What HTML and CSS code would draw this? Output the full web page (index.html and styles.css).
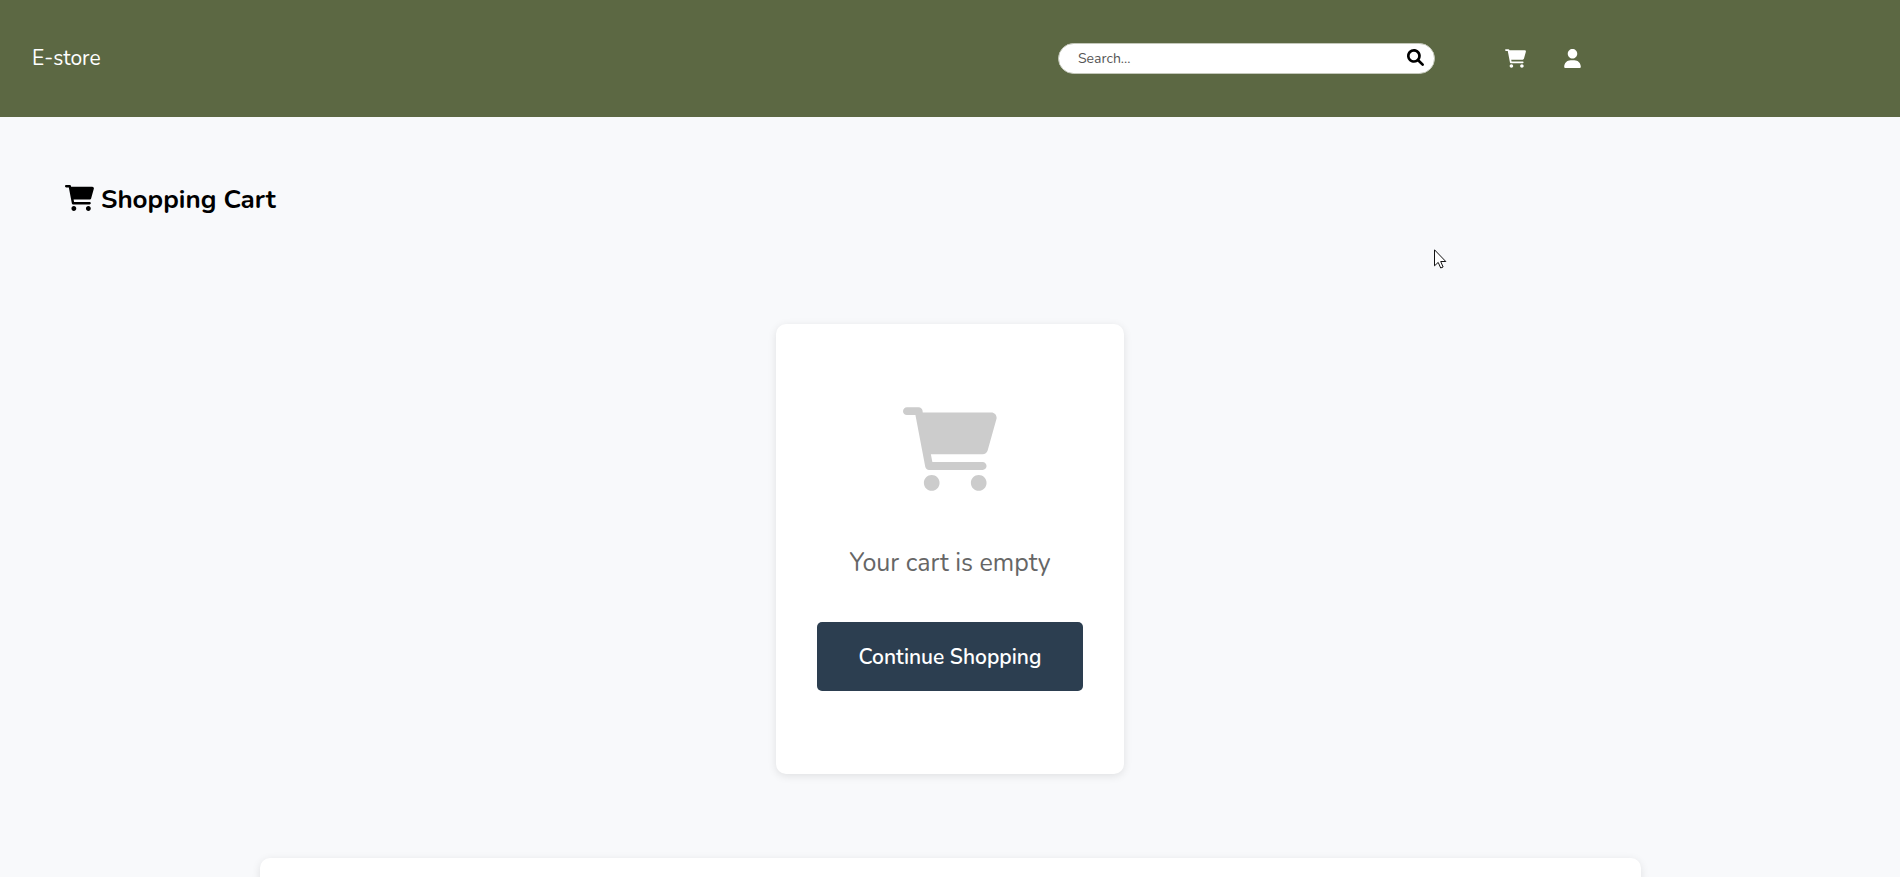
FILE: index.html
```html
<!DOCTYPE html>
<html lang="en">
<head>
<meta charset="utf-8">
<meta name="viewport" content="width=device-width, initial-scale=1">
<title>E-store</title>
<link rel="stylesheet" href="styles.css">
</head>
<body>
<svg class="sprite" aria-hidden="true">
  <symbol id="cart" viewBox="0 0 576 512"><path d="M96 0C107.5 0 117.4 8.19 119.6 19.51L121.1 32H541.8C562.1 32 578.3 52.25 572.6 72.66L518.6 264.7C514.7 278.5 502.1 288 487.8 288H170.7L179.9 336H488C501.3 336 512 346.7 512 360C512 373.3 501.3 384 488 384H159.1C148.5 384 138.6 375.8 136.4 364.5L76.14 48H24C10.75 48 0 37.25 0 24C0 10.75 10.75 0 24 0H96zM128 464C128 437.5 149.5 416 176 416C202.5 416 224 437.5 224 464C224 490.5 202.5 512 176 512C149.5 512 128 490.5 128 464zM512 464C512 490.5 490.5 512 464 512C437.5 512 416 490.5 416 464C416 437.5 437.5 416 464 416C490.5 416 512 437.5 512 464z"/></symbol>
</svg>
<header class="header">
  <a class="brand" href="#">E-store</a>
  <form class="search" role="search">
    <input class="search-input" type="search" placeholder="Search..." aria-label="Search">
    <button class="search-button" type="button" aria-label="Search">
      <svg class="search-icon" viewBox="0 0 512 512"><path d="M500.3 443.7l-119.7-119.7c27.22-40.41 40.65-90.9 33.46-144.7C401.8 87.79 326.8 13.32 235.2 1.723C99.01-15.51-15.51 99.01 1.724 235.2c11.6 91.64 86.08 166.7 177.6 178.9c53.8 7.189 104.3-6.236 144.7-33.46l119.7 119.7c15.62 15.62 40.95 15.62 56.57 0C515.9 484.7 515.9 459.3 500.3 443.7zM79.1 208c0-70.58 57.42-128 128-128s128 57.42 128 128c0 70.58-57.42 128-128 128S79.1 278.6 79.1 208z"/></svg>
    </button>
  </form>
  <nav class="actions" aria-label="Account">
    <a class="action" href="#" aria-label="Cart"><svg class="action-cart"><use href="#cart"/></svg></a>
    <a class="action" href="#" aria-label="Profile"><svg class="action-user" viewBox="0 0 448 512"><path d="M224 256c70.7 0 128-57.31 128-128s-57.3-128-128-128C153.3 0 96 57.31 96 128S153.3 256 224 256zM274.7 304H173.3C77.61 304 0 381.6 0 477.3c0 19.14 15.52 34.67 34.66 34.67h378.7C432.5 512 448 496.5 448 477.3C448 381.6 370.4 304 274.7 304z"/></svg></a>
  </nav>
</header>
<main class="main">
  <h1 class="title"><svg class="title-icon"><use href="#cart"/></svg>Shopping Cart</h1>
  <section class="empty">
    <svg class="empty-icon"><use href="#cart"/></svg>
    <p class="empty-text">Your cart is empty</p>
    <a class="continue" href="#">Continue Shopping</a>
  </section>
  <section class="panel"></section>
</main>
<svg class="pointer" viewBox="0 0 13 20" aria-hidden="true"><path d="M.5.8v16l3.7-3.4 2.5 5.6 2.4-1-2.4-5.5h5.1z"/></svg>
</body>
</html>
```
FILE: styles.css
```css
* {
  box-sizing: border-box;
}

body {
  margin: 0;
  background: #f8f9fb;
  color: #000;
  font-family: Nunito, Lato, sans-serif;
  font-size: 20px;
}

.sprite {
  display: none;
}

svg {
  display: block;
  fill: currentColor;
}

.header {
  display: flex;
  align-items: center;
  padding: 43px 319px 43px 32px;
  background: #5c6843;
  color: #fff;
}

.brand {
  color: inherit;
  font-size: 21px;
  line-height: 31px;
  text-decoration: none;
}

.search {
  display: flex;
  align-items: center;
  width: 377px;
  height: 31px;
  margin-left: auto;
  padding: 0 10px 0 19px;
  border: 1px solid #c4c8bb;
  border-radius: 16px;
  background: #fff;
}

.search-input {
  flex: 1;
  min-width: 0;
  padding: 0;
  border: 0;
  outline: 0;
  background: none;
  font: inherit;
  font-size: 14px;
}

.search-input::placeholder {
  color: #555;
}

.search-button {
  padding: 0 0 2px;
  border: 0;
  background: none;
  color: #000;
}

.search-icon {
  width: 17px;
  height: 17px;
}

.actions {
  display: flex;
  gap: 38px;
  margin-left: 70px;
}

.action {
  color: inherit;
}

.action-cart {
  width: 21px;
  height: 19px;
}

.action-user {
  width: 17px;
  height: 19px;
}

.main {
  padding: 64px 65px 0;
}

.title {
  display: flex;
  align-items: flex-end;
  gap: 7px;
  margin: 0;
  font-size: 26px;
  line-height: 38px;
}

.title-icon {
  width: 29px;
  height: 26px;
  margin-bottom: 8px;
}

.empty {
  display: flex;
  flex-direction: column;
  align-items: center;
  width: fit-content;
  margin: 105px auto 84px;
  padding: 83px 41px;
  border-radius: 10px;
  background: #fff;
  box-shadow: 0 2px 8px rgba(0, 0, 0, 0.1);
}

.empty-icon {
  width: 94px;
  height: 84px;
  color: #ccc;
}

.empty-text {
  margin: 54px 0 41px;
  color: #666;
  font-size: 25px;
  line-height: 36px;
}

.continue {
  padding: 21px 42px 19px;
  border-radius: 5px;
  background: #2c3e50;
  color: #fff;
  font-size: 21px;
  font-weight: 600;
  line-height: 29px;
  text-decoration: none;
}

.panel {
  max-width: 1381px;
  min-height: 83px;
  margin: 0 auto;
  border-radius: 10px;
  background: #fff;
  box-shadow: 0 2px 8px rgba(0, 0, 0, 0.1);
}

.pointer {
  position: absolute;
  top: 249px;
  left: 1434px;
  width: 13px;
  height: 20px;
  fill: #fff;
  stroke: #111;
}
```
